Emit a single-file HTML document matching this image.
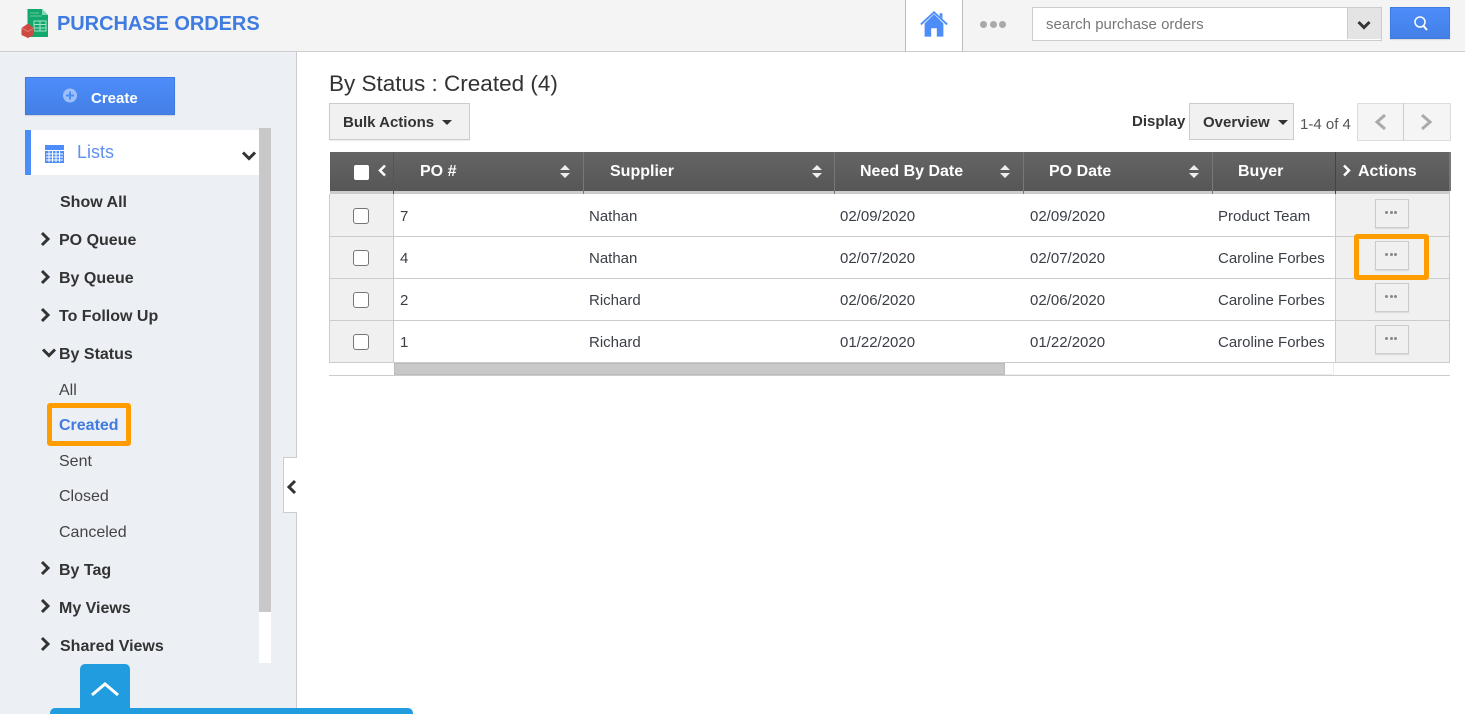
<!DOCTYPE html>
<html><head><meta charset="utf-8">
<style>
html,body{margin:0;padding:0;width:1465px;height:714px;overflow:hidden;background:#fff;font-family:"Liberation Sans",sans-serif;color:#333}
.a{position:absolute;box-sizing:border-box}
.t{position:absolute;white-space:nowrap;line-height:20px}
.m{font-size:16px;font-weight:bold;color:#333}
.s{font-size:16px;color:#444}
.c{font-size:15px;color:#3a3f47}
.h{font-size:16px;font-weight:bold;color:#fff}
svg{position:absolute;overflow:visible}
.chev{fill:none;stroke:#333;stroke-width:3}
.cb{position:absolute;left:353px;width:16px;height:16px;border:1px solid #767676;border-radius:3px;background:#fff;box-sizing:border-box}
.ab{position:absolute;left:1375px;width:34px;height:29px;background:#f0f0f0;border:1px solid #ccc;box-shadow:0 1px 1px rgba(0,0,0,.1);box-sizing:border-box}
.ab i{position:absolute;top:11px;width:3px;height:3px;border-radius:50%;background:#888}
</style></head><body>

<!-- top bar -->
<div class="a" style="left:0;top:0;width:1465px;height:52px;background:#f4f4f4;border-bottom:1px solid #ccc"></div>
<svg style="left:20px;top:8px" width="30" height="30" viewBox="0 0 30 30">
<path d="M7.500 1H22L28 7V29H7.500Z" fill="#12a86b"/><path d="M22 1L28 7H22Z" fill="#7fd9b4"/>
<path d="M10 5H19M10 8H22" stroke="#62c9a0" stroke-width="1"/>
<path d="M14 13H26V23H14ZM14 16.500H26M14 20H26M20 13V23" fill="none" stroke="#a5e4cb" stroke-width="1"/>
<path d="M1.500 20L8 15.500L14 20V27L8 30L1.500 27Z" fill="#cd4a43"/><path d="M1.500 20L8 23.500L14 20" fill="none" stroke="#e07d76" stroke-width="1"/>
</svg>
<div class="t" style="left:57px;top:13px;font-size:20px;font-weight:bold;color:#3f7be0;line-height:22px;letter-spacing:-.05px">PURCHASE ORDERS</div>

<div class="a" style="left:905px;top:0;width:58px;height:51px;background:#fff;border-left:1px solid #bbb;border-right:1px solid #bbb"></div>
<svg style="left:919px;top:10px" width="30" height="27" viewBox="0 0 32 28">
<path d="M6 14V28H13V19H19V28H26V14L16 4Z" fill="#4d8dfa"/>
<path d="M2 15L16 2L30 15" fill="none" stroke="#4d8dfa" stroke-width="2"/><path d="M22 3H25V9L22 6Z" fill="#4d8dfa"/>
</svg>
<div class="a" style="left:980px;top:21px;width:7px;height:7px;border-radius:50%;background:#a9a9a9"></div>
<div class="a" style="left:990px;top:21px;width:7px;height:7px;border-radius:50%;background:#a9a9a9"></div>
<div class="a" style="left:999px;top:21px;width:7px;height:7px;border-radius:50%;background:#a9a9a9"></div>
<div class="a" style="left:1032px;top:7px;width:350px;height:34px;background:#fff;border:1px solid #ccc"></div>
<div class="t" style="left:1046px;top:15px;font-size:15px;color:#777">search purchase orders</div>
<div class="a" style="left:1347px;top:8px;width:34px;height:31px;background:#e4e4e4;border-left:1px solid #ccc"></div>
<svg style="left:1357px;top:20px" width="14" height="10"><path d="M1.500 2L7 7.500L12.500 2" class="chev"/></svg>
<div class="a" style="left:1390px;top:7px;width:60px;height:32px;background:linear-gradient(#4d8dfa,#437fe6);border:1px solid #3f7be0;box-shadow:0 1px 1px rgba(0,0,0,.12)"></div>
<svg style="left:1413px;top:15px" width="16" height="17"><circle cx="7" cy="7" r="5" fill="none" stroke="#fff" stroke-width="1.500"/><path d="M10.500 11L14 15" stroke="#fff" stroke-width="2"/></svg>

<!-- sidebar -->
<div class="a" style="left:0;top:52px;width:297px;height:662px;background:#eceff4;border-right:1px solid #ccc"></div>
<div class="a" style="left:25px;top:77px;width:150px;height:38px;background:linear-gradient(#4d8dfa,#437fe6);border:1px solid #3f7be0;box-shadow:0 1px 1px rgba(0,0,0,.12)"></div>
<svg style="left:62px;top:88px" width="16" height="16"><circle cx="8" cy="7.500" r="7" fill="#9dbff8"/><path d="M4 7.500H12M8 3.500V11.500" stroke="#4d8dfa" stroke-width="2"/></svg>
<div class="t" style="left:91px;top:89px;font-size:15px;font-weight:bold;color:#fff">Create</div>

<div class="a" style="left:25px;top:130px;width:234px;height:45px;background:#fff;border-left:6px solid #4d8dfa"></div>
<svg style="left:45px;top:145px" width="19" height="18"><rect width="19" height="18" fill="#4d8dfa"/><path d="M0 5.500H19M1 9H18M1 12H18M1 15H18M4 6V17M7.500 6V17M11 6V17M14.500 6V17" stroke="#fff" stroke-width="1" fill="none"/></svg>
<div class="t" style="left:77px;top:142px;font-size:18px;color:#5f8ff0">Lists</div>
<svg style="left:241px;top:150px" width="16" height="12"><path d="M2 2.500L8 8.500L14 2.500" class="chev"/></svg>

<div class="a" style="left:259px;top:128px;width:12px;height:535px;background:#fff"></div>
<div class="a" style="left:259px;top:128px;width:12px;height:484px;background:#c8c8c8"></div>

<div class="t m" style="left:60px;top:193px">Show All</div>
<svg style="left:40px;top:231px" width="10" height="16"><path d="M2 2L8 8L2 14" class="chev"/></svg>
<div class="t m" style="left:59px;top:231px">PO Queue</div>
<svg style="left:40px;top:269px" width="10" height="16"><path d="M2 2L8 8L2 14" class="chev"/></svg>
<div class="t m" style="left:59px;top:269px">By Queue</div>
<svg style="left:40px;top:307px" width="10" height="16"><path d="M2 2L8 8L2 14" class="chev"/></svg>
<div class="t m" style="left:59px;top:307px">To Follow Up</div>
<svg style="left:41px;top:347px" width="16" height="12"><path d="M2 2.500L8 8.500L14 2.500" class="chev"/></svg>
<div class="t m" style="left:59px;top:345px">By Status</div>
<div class="t s" style="left:59px;top:381px">All</div>
<div class="t m" style="left:59px;top:416px;color:#3f7be0">Created</div>
<div class="a" style="left:47px;top:403px;width:84px;height:43px;border:5px solid #ff9c00;border-radius:3px"></div>
<div class="t s" style="left:59px;top:452px">Sent</div>
<div class="t s" style="left:59px;top:487px">Closed</div>
<div class="t s" style="left:59px;top:523px">Canceled</div>
<svg style="left:40px;top:560px" width="10" height="16"><path d="M2 2L8 8L2 14" class="chev"/></svg>
<div class="t m" style="left:59px;top:561px">By Tag</div>
<svg style="left:40px;top:598px" width="10" height="16"><path d="M2 2L8 8L2 14" class="chev"/></svg>
<div class="t m" style="left:59px;top:599px">My Views</div>
<svg style="left:40px;top:636px" width="10" height="16"><path d="M2 2L8 8L2 14" class="chev"/></svg>
<div class="t m" style="left:60px;top:637px">Shared Views</div>

<div class="a" style="left:283px;top:457px;width:14px;height:56px;background:#fff;border:1px solid #ccc;border-right:0"></div>
<svg style="left:287px;top:479px" width="10" height="16"><path d="M8 2L2 8L8 14" class="chev"/></svg>

<div class="a" style="left:80px;top:664px;width:50px;height:50px;background:#209cdf;border-radius:5px 5px 0 0"></div>
<svg style="left:90px;top:681px" width="30" height="18"><path d="M2 14L15 3L28 14" fill="none" stroke="#fff" stroke-width="3"/></svg>
<div class="a" style="left:50px;top:708px;width:363px;height:6px;background:#209cdf;border-radius:5px 5px 0 0"></div>

<!-- main -->
<div class="t" style="left:329px;top:71px;font-size:22.500px;line-height:26px;color:#333">By Status : Created (4)</div>
<div class="a" style="left:329px;top:103px;width:141px;height:37px;background:#f1f1f1;border:1px solid #ccc;box-shadow:0 1px 1px rgba(0,0,0,.08)"></div>
<div class="t" style="left:343px;top:113px;font-size:15px;font-weight:bold;color:#333">Bulk Actions</div>
<div class="a" style="left:442px;top:120px;width:0;height:0;border:5px solid transparent;border-top-color:#333;border-bottom:0"></div>

<div class="t" style="left:1132px;top:112px;font-size:15px;font-weight:bold;color:#333">Display</div>
<div class="a" style="left:1189px;top:103px;width:105px;height:37px;background:#f1f1f1;border:1px solid #ccc"></div>
<div class="t" style="left:1203px;top:113px;font-size:15px;font-weight:bold;color:#333">Overview</div>
<div class="a" style="left:1278px;top:120px;width:0;height:0;border:5px solid transparent;border-top-color:#333;border-bottom:0"></div>
<div class="t" style="left:1300px;top:115px;font-size:15px;color:#555">1-4 of 4</div>
<div class="a" style="left:1357px;top:103px;width:94px;height:38px;background:#f5f5f5;border:1px solid #ddd"></div>
<div class="a" style="left:1403px;top:103px;width:1px;height:38px;background:#ccc"></div>
<svg style="left:1374px;top:113px" width="13" height="18"><path d="M11 2L3 9L11 16" fill="none" stroke="#aaa" stroke-width="3"/></svg>
<svg style="left:1420px;top:113px" width="13" height="18"><path d="M2 2L10 9L2 16" fill="none" stroke="#aaa" stroke-width="3"/></svg>

<!-- table head -->
<div class="a" style="left:330px;top:152px;width:1120px;height:42px;background:linear-gradient(#656565,#565656);border-bottom:3px solid #ccc"></div>
<div class="a" style="left:1449px;top:152px;width:2px;height:39px;background:#777"></div>
<div class="a" style="left:393px;top:152px;width:1px;height:42px;background:#555"></div>
<div class="a" style="left:583px;top:152px;width:1px;height:42px;background:#777"></div>
<div class="a" style="left:834px;top:152px;width:1px;height:42px;background:#777"></div>
<div class="a" style="left:1023px;top:152px;width:1px;height:42px;background:#777"></div>
<div class="a" style="left:1212px;top:152px;width:1px;height:42px;background:#777"></div>
<div class="a" style="left:1335px;top:152px;width:1px;height:42px;background:#444"></div>
<div class="a" style="left:354px;top:165px;width:15px;height:15px;background:#fff;border-radius:2px"></div>
<svg style="left:377px;top:164px" width="10" height="14"><path d="M8 1.500L3 6.500L8 11.500" fill="none" stroke="#fff" stroke-width="2.500"/></svg>
<div class="t h" style="left:420px;top:162px">PO #</div>
<div class="t h" style="left:610px;top:162px">Supplier</div>
<div class="t h" style="left:860px;top:162px">Need By Date</div>
<div class="t h" style="left:1049px;top:162px">PO Date</div>
<div class="t h" style="left:1238px;top:162px">Buyer</div>
<svg style="left:1342px;top:164px" width="10" height="14"><path d="M2 1.500L7 6.500L2 11.500" fill="none" stroke="#fff" stroke-width="2.500"/></svg>
<div class="t h" style="left:1358px;top:162px">Actions</div>
<svg style="left:560px;top:165px" width="10" height="13"><path d="M0 5L5 0L10 5ZM0 8L5 13L10 8Z" fill="#eee"/></svg>
<svg style="left:812px;top:165px" width="10" height="13"><path d="M0 5L5 0L10 5ZM0 8L5 13L10 8Z" fill="#eee"/></svg>
<svg style="left:1000px;top:165px" width="10" height="13"><path d="M0 5L5 0L10 5ZM0 8L5 13L10 8Z" fill="#eee"/></svg>
<svg style="left:1189px;top:165px" width="10" height="13"><path d="M0 5L5 0L10 5ZM0 8L5 13L10 8Z" fill="#eee"/></svg>

<!-- side columns -->
<div class="a" style="left:329px;top:194px;width:65px;height:169px;background:#f0f0f0;border-left:1px solid #ccc;border-right:1px solid #ccc"></div>
<div class="a" style="left:1335px;top:194px;width:115px;height:169px;background:#f0f0f0;border-left:1px solid #ccc;border-right:1px solid #ccc"></div>
<!-- row lines -->
<div class="a" style="left:329px;top:236px;width:1121px;height:1px;background:#ccc"></div>
<div class="a" style="left:329px;top:278px;width:1121px;height:1px;background:#ccc"></div>
<div class="a" style="left:329px;top:320px;width:1121px;height:1px;background:#ccc"></div>
<div class="a" style="left:329px;top:362px;width:1121px;height:1px;background:#ccc"></div>

<!-- rows -->
<div class="cb" style="top:208px"></div><div class="cb" style="top:250px"></div><div class="cb" style="top:292px"></div><div class="cb" style="top:334px"></div>

<div class="t c" style="left:400px;top:207px">7</div><div class="t c" style="left:589px;top:207px">Nathan</div><div class="t c" style="left:840px;top:207px">02/09/2020</div><div class="t c" style="left:1030px;top:207px">02/09/2020</div><div class="t c" style="left:1218px;top:207px">Product Team</div>
<div class="t c" style="left:400px;top:249px">4</div><div class="t c" style="left:589px;top:249px">Nathan</div><div class="t c" style="left:840px;top:249px">02/07/2020</div><div class="t c" style="left:1030px;top:249px">02/07/2020</div><div class="t c" style="left:1218px;top:249px">Caroline Forbes</div>
<div class="t c" style="left:400px;top:291px">2</div><div class="t c" style="left:589px;top:291px">Richard</div><div class="t c" style="left:840px;top:291px">02/06/2020</div><div class="t c" style="left:1030px;top:291px">02/06/2020</div><div class="t c" style="left:1218px;top:291px">Caroline Forbes</div>
<div class="t c" style="left:400px;top:333px">1</div><div class="t c" style="left:589px;top:333px">Richard</div><div class="t c" style="left:840px;top:333px">01/22/2020</div><div class="t c" style="left:1030px;top:333px">01/22/2020</div><div class="t c" style="left:1218px;top:333px">Caroline Forbes</div>

<div class="ab" style="top:199px"><i style="left:9px"></i><i style="left:14px"></i><i style="left:18px"></i></div>
<div class="ab" style="top:241px"><i style="left:9px"></i><i style="left:14px"></i><i style="left:18px"></i></div>
<div class="ab" style="top:283px"><i style="left:9px"></i><i style="left:14px"></i><i style="left:18px"></i></div>
<div class="ab" style="top:325px"><i style="left:9px"></i><i style="left:14px"></i><i style="left:18px"></i></div>
<div class="a" style="left:1354px;top:234px;width:75px;height:46px;border:5px solid #ff9c00;border-radius:3px"></div>

<!-- scrollbar -->
<div class="a" style="left:394px;top:363px;width:940px;height:12px;background:#fff;border-right:1px solid #eee;border-bottom:1px solid #eee"></div>
<div class="a" style="left:394px;top:363px;width:611px;height:12px;background:#c8c8c8;border:1px solid #bbb"></div>
<div class="a" style="left:329px;top:375px;width:1121px;height:1px;background:#ccc"></div>

</body></html>
